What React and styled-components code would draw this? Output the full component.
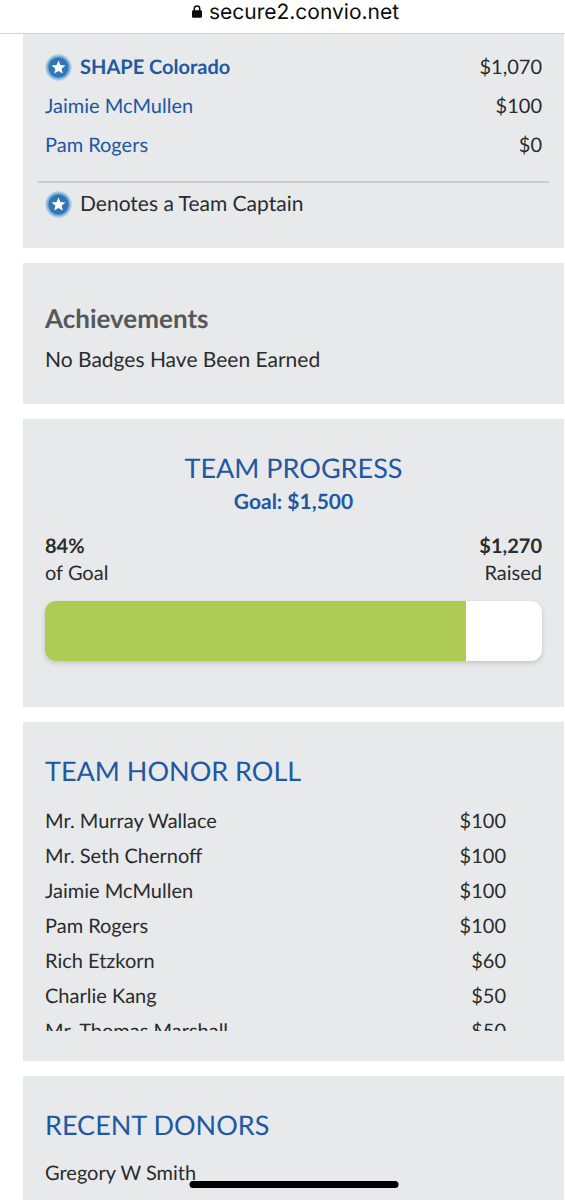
import styled, { createGlobalStyle } from 'styled-components'

const GlobalStyle = createGlobalStyle`
   * {
      box-sizing: border-box;
   }
   body {
      margin: 0;
      background: #fff;
      color: #2b2c2e;
      font-family: Lato, sans-serif;
      font-size: 20px;
      line-height: 28px;
      text-rendering: geometricPrecision;
   }
`

const Page = styled.div`
   display: flex;
   flex-direction: column;
   min-height: 100vh;
`

const AddressBar = styled.header`
   display: flex;
   justify-content: center;
   gap: 7px;
   height: 34px;
   padding-left: 26px;
   border-bottom: 1px solid #d3d4d6;
   color: #0c0c0c;
   font-family: Inter, sans-serif;
   font-size: 21px;
   line-height: 26px;
   svg {
      margin-top: 5px;
   }
`

const Main = styled.main`
   display: flex;
   flex: 1;
   flex-direction: column;
   gap: 15px;
   padding: 0 1px 0 23px;
`

const Panel = styled.section`
   flex-grow: ${(props) => (props.$grow ? 1 : 0)};
   padding: ${(props) => props.$p || '32px 22px 30px'};
   background: #e7e9eb;
`

const Title = styled.h2`
   margin: 0;
   color: #2158a3;
   font-size: 27px;
   font-weight: 400;
   line-height: 34px;
   text-align: ${(props) => (props.$center ? 'center' : 'left')};
`

const SubTitle = styled.h3`
   margin: 0 0 12px;
   color: #565759;
   font-size: 26px;
   font-weight: 700;
   line-height: 32px;
`

const Text = styled.p`
   margin: 0;
   font-size: 21px;
`

const Goal = styled.p`
   margin: 0 0 14px;
   color: #2158a3;
   font-size: 21px;
   font-weight: 700;
   line-height: 34px;
   text-align: center;
`

const List = styled.ul`
   margin: 0;
   padding: 0;
   list-style: none;
`

const HonorList = styled(List)`
   height: 228px;
   margin-top: 15px;
   padding-right: 36px;
   overflow: hidden;
`

const Row = styled.li`
   display: flex;
   align-items: center;
   justify-content: space-between;
   height: ${(props) => props.$h || '35px'};
`

const Member = styled.a`
   display: flex;
   align-items: center;
   gap: 8px;
   color: #2158a3;
   font-weight: ${(props) => (props.$captain ? 700 : 400)};
   text-decoration: none;
`

const Divider = styled.hr`
   height: 2px;
   margin: 17px -7px 1px;
   border: 0;
   background: #cbccce;
`

const Legend = styled.div`
   display: flex;
   align-items: center;
   gap: 8px;
   height: 39px;
   font-size: 21px;
`

const Stats = styled.div`
   display: flex;
   justify-content: space-between;
   margin-bottom: 14px;
   line-height: 27px;
`

const Stat = styled.div`
   display: flex;
   flex-direction: column;
   text-align: ${(props) => props.$align || 'left'};
`

const Track = styled.div`
   height: 60px;
   margin-bottom: 16px;
   overflow: hidden;
   border-radius: 11px;
   background: #fff;
   box-shadow: 0 2px 5px rgba(0, 0, 0, 0.17);
`

const Fill = styled.div`
   height: 100%;
   background: #aecb55;
`

const HomeIndicator = styled.div`
   position: fixed;
   bottom: 12px;
   left: 52%;
   width: 209px;
   height: 7px;
   border-radius: 4px;
   background: #000;
   transform: translateX(-50%);
`

const CaptainSvg = styled.svg`
   width: 27px;
   height: 27px;
   margin-top: 2px;
`

const LockIcon = () => (
   <svg width="10" height="13" viewBox="0 0 10 13" aria-hidden="true">
      <path d="M2.3 6V3.6a2.7 2.7 0 0 1 5.4 0V6" fill="none" stroke="#0c0c0c" strokeWidth="1.5" />
      <rect y="5.2" width="10" height="7.6" rx="1.3" fill="#0c0c0c" />
   </svg>
)

const CaptainIcon = () => (
   <CaptainSvg viewBox="0 0 27 27" aria-hidden="true">
      <circle cx="13.5" cy="13.5" r="13.2" fill="#b3d1ea" />
      <circle cx="13.5" cy="13.5" r="11.9" fill="#7fb1dd" />
      <circle cx="13.5" cy="13.5" r="10.2" fill="#3276b8" />
      <path
         d="M13.5 6.5l1.9 4.6 5 .4-3.8 3.2 1.2 4.9-4.3-2.7-4.3 2.7 1.2-4.9-3.8-3.2 5-.4z"
         fill="#fff"
      />
   </CaptainSvg>
)

const members = [
   { name: 'SHAPE Colorado', amount: '$1,070', captain: true },
   { name: 'Jaimie McMullen', amount: '$100' },
   { name: 'Pam Rogers', amount: '$0' },
]

const honorRoll = [
   { name: 'Mr. Murray Wallace', amount: '$100' },
   { name: 'Mr. Seth Chernoff', amount: '$100' },
   { name: 'Jaimie McMullen', amount: '$100' },
   { name: 'Pam Rogers', amount: '$100' },
   { name: 'Rich Etzkorn', amount: '$60' },
   { name: 'Charlie Kang', amount: '$50' },
   { name: 'Mr. Thomas Marshall', amount: '$50' },
]

const raised = 1270
const goal = 1500

const App = () => {
   const percent = (raised / goal) * 100

   return (
      <Page>
         <GlobalStyle />
         <AddressBar>
            <LockIcon />
            <span>secure2.convio.net</span>
         </AddressBar>
         <Main>
            <Panel $p="13px 22px 25px">
               <List>
                  {members.map((m) => (
                     <Row key={m.name} $h="39px">
                        <Member href="#" $captain={m.captain}>
                           {m.captain && <CaptainIcon />}
                           {m.name}
                        </Member>
                        <span>{m.amount}</span>
                     </Row>
                  ))}
               </List>
               <Divider />
               <Legend>
                  <CaptainIcon />
                  Denotes a Team Captain
               </Legend>
            </Panel>
            <Panel $p="39px 22px 30px">
               <SubTitle>Achievements</SubTitle>
               <Text>No Badges Have Been Earned</Text>
            </Panel>
            <Panel>
               <Title $center>TEAM PROGRESS</Title>
               <Goal>Goal: $1,500</Goal>
               <Stats>
                  <Stat>
                     <strong>{Math.floor(percent)}%</strong>
                     <span>of Goal</span>
                  </Stat>
                  <Stat $align="right">
                     <strong>$1,270</strong>
                     <span>Raised</span>
                  </Stat>
               </Stats>
               <Track>
                  <Fill style={{ width: `${percent}%` }} />
               </Track>
            </Panel>
            <Panel>
               <Title>TEAM HONOR ROLL</Title>
               <HonorList>
                  {honorRoll.map((d) => (
                     <Row key={d.name}>
                        <span>{d.name}</span>
                        <span>{d.amount}</span>
                     </Row>
                  ))}
               </HonorList>
            </Panel>
            <Panel $grow $p="32px 22px 0">
               <Title>RECENT DONORS</Title>
               <List>
                  <Row $h="62px">Gregory W Smith</Row>
               </List>
            </Panel>
         </Main>
         <HomeIndicator />
      </Page>
   )
}

export default App
